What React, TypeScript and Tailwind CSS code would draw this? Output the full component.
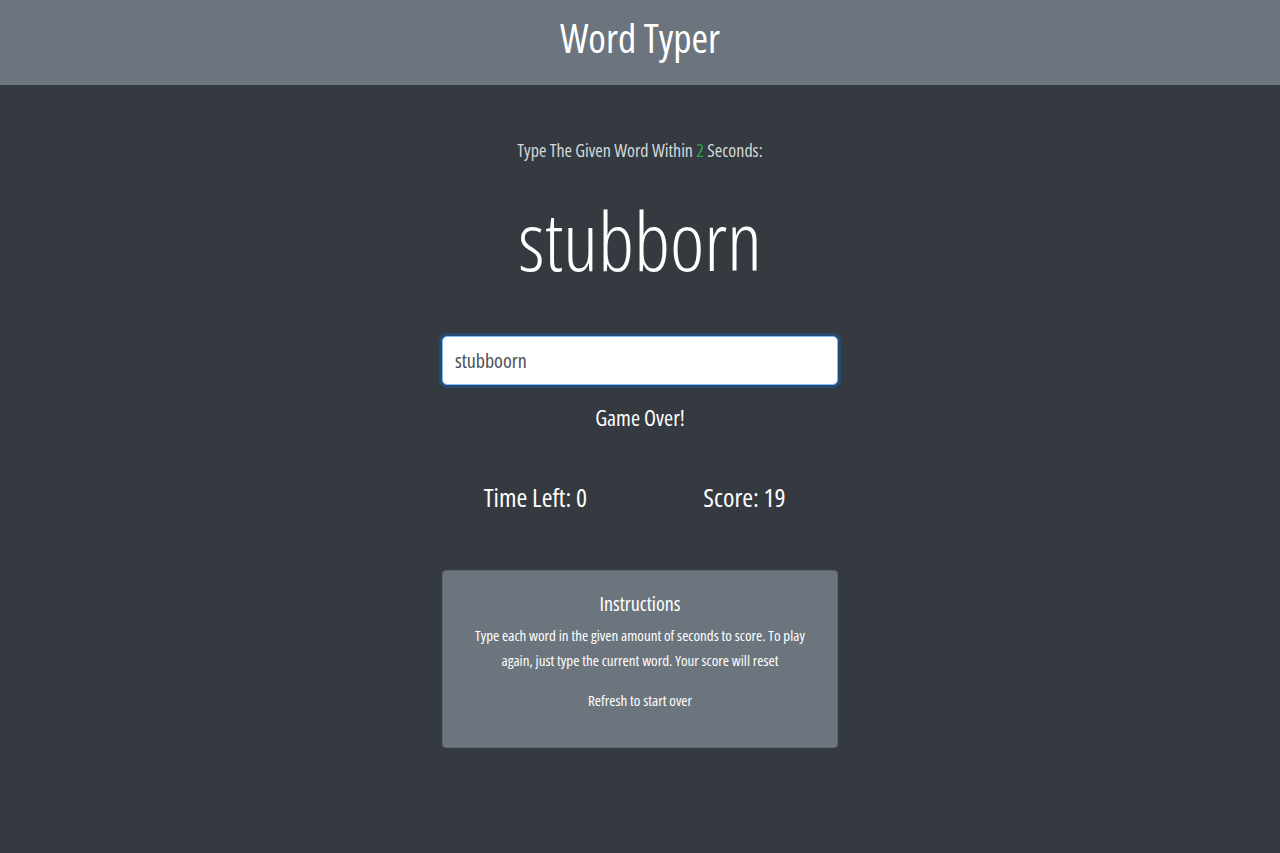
import React from 'react';

const App: React.FC = () => {
  const [value, setValue] = React.useState('stubboorn');

  return (
    <div className="min-h-screen bg-[#343a40] font-['Open_Sans',_sans-serif] font-stretch-condensed text-white">
      {/* Header */}
      <header className="h-[85px] bg-[#6c757d] flex items-center justify-center pb-[9px]">
        <h1 className="text-[40px] leading-none">Word Typer</h1>
      </header>

      <main className="pt-[52px] flex flex-col items-center text-center">
        <p className="text-[18px] leading-[27px] text-[#d6d8da]">
          Type The Given Word Within <span className="text-[#28a745]">2</span> Seconds:
        </p>
        <h2 className="mt-[34px] text-[82px] leading-none font-light">stubborn</h2>

        <input
          type="text"
          value={value}
          onChange={(e) => setValue(e.target.value)}
          className="mt-[56px] w-[396px] h-[49px] px-3 rounded-[5px] bg-white text-[20px] text-[#495057] border border-[#80bdff] shadow-[0_0_0_3px_rgba(0,123,255,0.25)] outline-none font-stretch-condensed"
        />

        <p className="mt-[17px] text-[22px] leading-[30px]">Game Over!</p>

        <div className="mt-[48px] w-[418px] grid grid-cols-2 text-[26px] leading-[34px]">
          <div>Time Left: 0</div>
          <div>Score: 19</div>
        </div>

        {/* Instructions card */}
        <div className="mt-[56px] w-[396px] h-[178px] rounded-[4px] bg-[#6c757d] border border-[#5f666d] px-5 pt-[19px]">
          <h5 className="text-[20px] leading-[28px]">Instructions</h5>
          <p className="mt-[5px] text-[15px] leading-[25px]">
            Type each word in the given amount of seconds to score. To play again, just type the current word. Your score will reset
          </p>
          <p className="mt-[15px] text-[15px] leading-[25px]">Refresh to start over</p>
        </div>
      </main>
    </div>
  );
};

export default App;
